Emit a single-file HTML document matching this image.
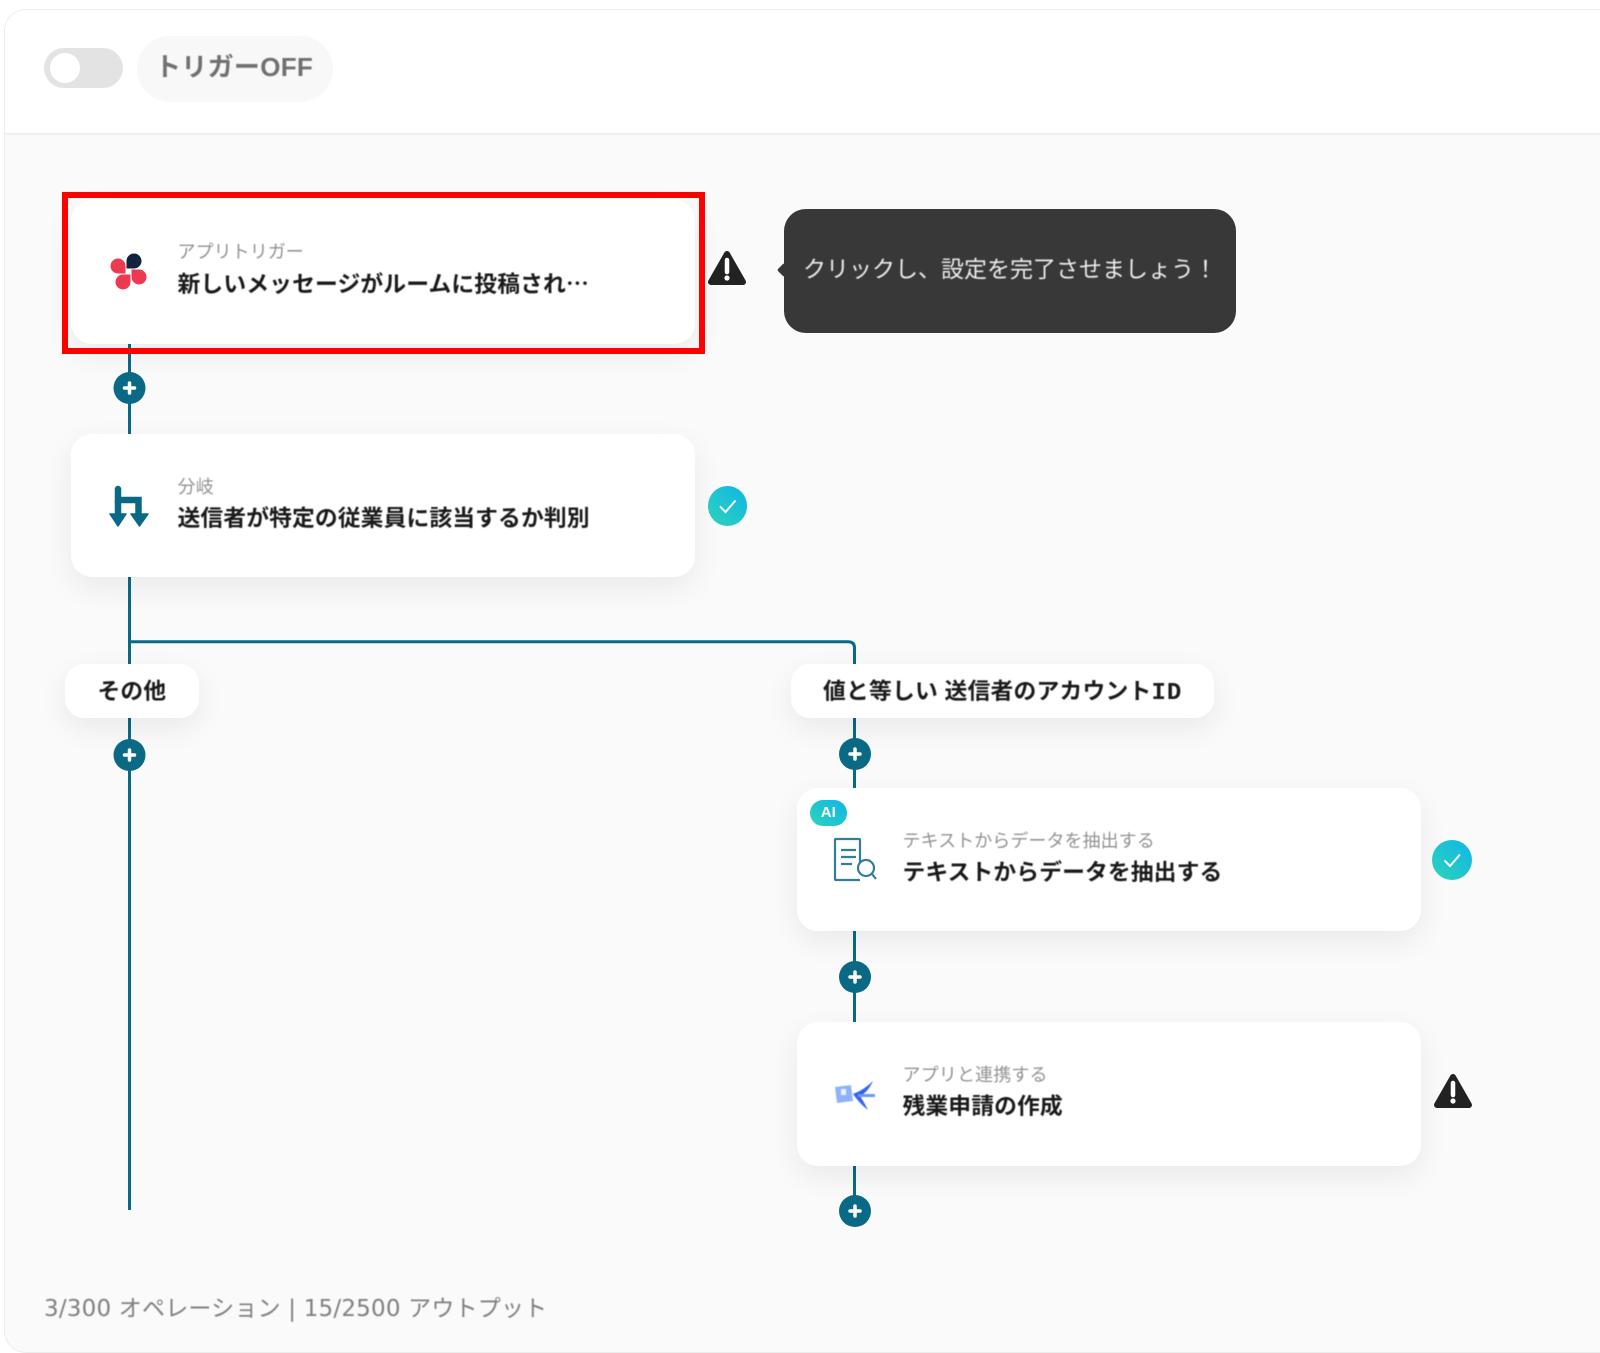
<!DOCTYPE html>
<html lang="ja"><head><meta charset="utf-8"><title>トリガー</title>
<style>
html,body{margin:0;padding:0;background:#fff}
body{width:1600px;height:1353px;position:relative;overflow:hidden;font-family:"Liberation Sans","Noto Sans CJK JP",sans-serif}
.a{position:absolute}
.frame{left:3.500px;top:9px;width:1640px;height:1342px;border:1px solid #ececec;border-radius:22px;background:#fafafa;overflow:hidden;box-sizing:content-box}
.head{left:0;top:0;right:0;height:123px;background:#fff;border-bottom:2px solid #efefef}
.card{background:#fff;border-radius:21px;box-shadow:0 10px 30px rgba(0,0,0,.07)}
.t{white-space:nowrap;line-height:30px;filter:blur(.45px)}
.title{font-size:22.8px;font-weight:700;color:#1a1a1a;letter-spacing:.1px}
.sub{font-size:18px;color:#929292}
.l{background:#0a6a85}
.jp{font-family:"Noto Sans CJK JP",sans-serif}
svg{position:absolute;overflow:visible}
</style></head><body>
<div class="a frame"><div class="a head"></div></div>

<div class="a" style="left:44px;top:48px;width:79px;height:40px;border-radius:20px;background:#e3e3e3"></div>
<div class="a" style="left:50px;top:53px;width:30px;height:30px;border-radius:50%;background:#fff"></div>
<div class="a" style="left:136.500px;top:36px;width:196px;height:66px;border-radius:33px;background:#f8f8f8"></div>
<div class="a t" style="left:155px;top:52px;font-size:26px;font-weight:700;color:#707070;letter-spacing:.3px">トリガーOFF</div>

<!-- lines -->
<div class="a l" style="left:128px;top:344px;width:3px;height:90px"></div>
<div class="a l" style="left:128px;top:577px;width:3px;height:87px"></div>
<div class="a l" style="left:128px;top:718px;width:3px;height:492px"></div>
<svg style="left:0;top:0" width="1600" height="1353"><path d="M130 641.800H848Q854.500 641.800 854.500 648V664" fill="none" stroke="#0a6a85" stroke-width="3"/></svg>
<div class="a l" style="left:853px;top:718px;width:3px;height:70px"></div>
<div class="a l" style="left:853px;top:931px;width:3px;height:91px"></div>
<div class="a l" style="left:853px;top:1166px;width:3px;height:30px"></div>

<!-- card 1 -->
<div class="a card" style="left:70.500px;top:200px;width:624.500px;height:143.500px"></div>
<div class="a" style="left:62px;top:192px;width:643px;height:162px;border:6.500px solid #f00;box-sizing:border-box"></div>
<svg style="left:0;top:0;filter:blur(.35px)" width="1600" height="1353">
<g fill="#ee3a50">
<path transform="translate(118 266) rotate(-90)" d="M-7.500 0A7.500 7.500 0 1 1 0 7.500H-7.500Z"/>
<path transform="translate(139 277) rotate(90)" d="M-7.500 0A7.500 7.500 0 1 1 0 7.500H-7.500Z"/>
<path transform="translate(123 282) rotate(180)" d="M-7.500 0A7.500 7.500 0 1 1 0 7.500H-7.500Z"/>
</g>
<path fill="#12223f" transform="translate(134 261)" d="M-7.500 0A7.500 7.500 0 1 1 0 7.500H-7.500Z"/>
</svg>
<div class="a t sub" style="left:177.500px;top:237px;letter-spacing:.05px">アプリトリガー</div>
<div class="a t title" style="left:177.500px;top:267.500px;letter-spacing:.12px">新しいメッセージがルームに投稿され<span class="jp">…</span></div>

<!-- warn 1 -->
<svg style="left:707px;top:250px" width="40" height="36" viewBox="0 0 40 36"><path d="M20 4L36 32H4Z" fill="#222" stroke="#222" stroke-width="6" stroke-linejoin="round"/><path d="M20 10V22" stroke="#fff" stroke-width="4.500" stroke-linecap="round"/><circle cx="20" cy="28" r="2.600" fill="#fff"/></svg>

<!-- tooltip -->
<div class="a" style="left:783.500px;top:209px;width:452.500px;height:124px;border-radius:22px;background:#383838"></div>
<div class="a" style="left:778.500px;top:265px;width:10px;height:10px;background:#383838;transform:rotate(45deg);border-radius:2px"></div>
<div class="a t" style="left:803px;top:253.500px;font-size:23px;color:#ececec">クリックし、設定を完了させましょう！</div>

<!-- card 2 -->
<div class="a card" style="left:71px;top:433.500px;width:624px;height:143.500px"></div>
<svg style="left:0;top:0;filter:blur(.35px)" width="1600" height="1353" fill="none">
<path d="M118 489V500H138.500V515" stroke="#0a6a85" stroke-width="6.500" stroke-linecap="round" stroke-linejoin="miter"/>
<path d="M118 500V515" stroke="#0a6a85" stroke-width="6.500"/>
<path d="M110 514H126L118 526ZM131 514H148L139.500 526Z" fill="#0a6a85" stroke="#0a6a85" stroke-width="1.500" stroke-linejoin="round"/>
</svg>
<div class="a t sub" style="left:177.500px;top:472px;letter-spacing:.3px">分岐</div>
<div class="a t title" style="left:177.500px;top:503px">送信者が特定の従業員に該当するか判別</div>
<!-- check 1 -->
<div class="a ck" style="left:708px;top:486px;width:39px;height:39.500px;border-radius:50%;background:linear-gradient(45deg,#2dd4b8,#10b5e8)"></div>
<svg style="left:707px;top:486px" width="40" height="40" fill="none"><path d="M13 20.500L18.500 26L28.500 14.500" stroke="#fff" stroke-width="2"/></svg>

<!-- labels -->
<div class="a card" style="left:65px;top:664px;width:134px;height:54px;border-radius:19px"></div>
<div class="a t title" style="left:97.500px;top:675.500px">その他</div>
<div class="a card" style="left:791px;top:664px;width:423px;height:54px;border-radius:19px"></div>
<div class="a t title" style="left:823px;top:675.500px;letter-spacing:.2px">値と等しい 送信者のアカウント<span style="font-family:'Liberation Mono',monospace;font-size:24px;letter-spacing:1px">ID</span></div>

<!-- card 3 -->
<div class="a card" style="left:797px;top:787.500px;width:623.500px;height:143.500px"></div>
<div class="a" style="left:810px;top:800px;width:36.500px;height:26px;border-radius:13px;background:linear-gradient(45deg,#2dd4b8,#10b5e8);color:#fff;font-size:15px;font-weight:700;text-align:center;line-height:26px">AI</div>
<svg style="left:0;top:0;filter:blur(.35px)" width="1600" height="1353" fill="none" stroke="#2e7f97" stroke-width="2.200">
<path d="M860 865V840Q860 839 859 839H836Q835 839 835 840V879Q835 880 836 880H860"/>
<path d="M841 850H856M841 857H856M841 864H852"/>
<circle cx="866" cy="868" r="8" fill="#fff"/>
<path d="M872 874L876 879"/>
</svg>
<div class="a t sub" style="left:902.500px;top:826px;letter-spacing:.06px">テキストからデータを抽出する</div>
<div class="a t title" style="left:902.500px;top:857px">テキストからデータを抽出する</div>
<div class="a" style="left:1432px;top:840px;width:40px;height:40px;border-radius:50%;background:linear-gradient(45deg,#2dd4b8,#10b5e8)"></div>
<svg style="left:1432px;top:840px" width="40" height="40" fill="none"><path d="M12.500 20.500L18 26L28 14.500" stroke="#fff" stroke-width="2"/></svg>

<!-- card 4 -->
<div class="a card" style="left:797px;top:1021.500px;width:623.500px;height:144.500px"></div>
<svg style="left:0;top:0;filter:blur(.6px)" width="1600" height="1353">
<path d="M835 1087L851 1085L853 1101L837 1103Z" fill="#8fb2fa"/>
<path d="M841 1089H846V1095H841Z" fill="#eaf1ff"/>
<path d="M853 1094Q864 1090 873 1081Q868 1092 860 1096Q864 1102 868 1110Q860 1104 853 1094Z" fill="#2f64ee"/>
<path d="M858 1094H875V1097H858Z" fill="#6f96f5"/>
</svg>
<div class="a t sub" style="left:902.500px;top:1060px;letter-spacing:.15px">アプリと連携する</div>
<div class="a t title" style="left:902.500px;top:1090.500px">残業申請の作成</div>
<svg style="left:1432.500px;top:1073px" width="40" height="36" viewBox="0 0 40 36"><path d="M20 4L36 32H4Z" fill="#222" stroke="#222" stroke-width="6" stroke-linejoin="round"/><path d="M20 10V22" stroke="#fff" stroke-width="4.500" stroke-linecap="round"/><circle cx="20" cy="28" r="2.600" fill="#fff"/></svg>

<!-- plus buttons -->
<svg style="left:0;top:0" width="1600" height="1353">
<g fill="#0a6a85"><circle cx="129.500" cy="388" r="16"/><circle cx="129.500" cy="755" r="16"/><circle cx="855" cy="754" r="16"/><circle cx="855" cy="977" r="16"/><circle cx="855" cy="1211" r="16"/></g>
<g stroke="#fff" stroke-width="3.500" stroke-linecap="round">
<path d="M129.500 383V393M124.500 388H134.500"/>
<path d="M129.500 750V760M124.500 755H134.500"/>
<path d="M855 749V759M850 754H860"/>
<path d="M855 972V982M850 977H860"/>
<path d="M855 1206V1216M850 1211H860"/>
</g></svg>

<div class="a t" style="left:44px;top:1294px;font-family:'DejaVu Sans','Noto Sans CJK JP',sans-serif;font-size:23px;color:#7f7f7f;letter-spacing:.2px">3/300 オペレーション | 15/2500 アウトプット</div>
</body></html>
